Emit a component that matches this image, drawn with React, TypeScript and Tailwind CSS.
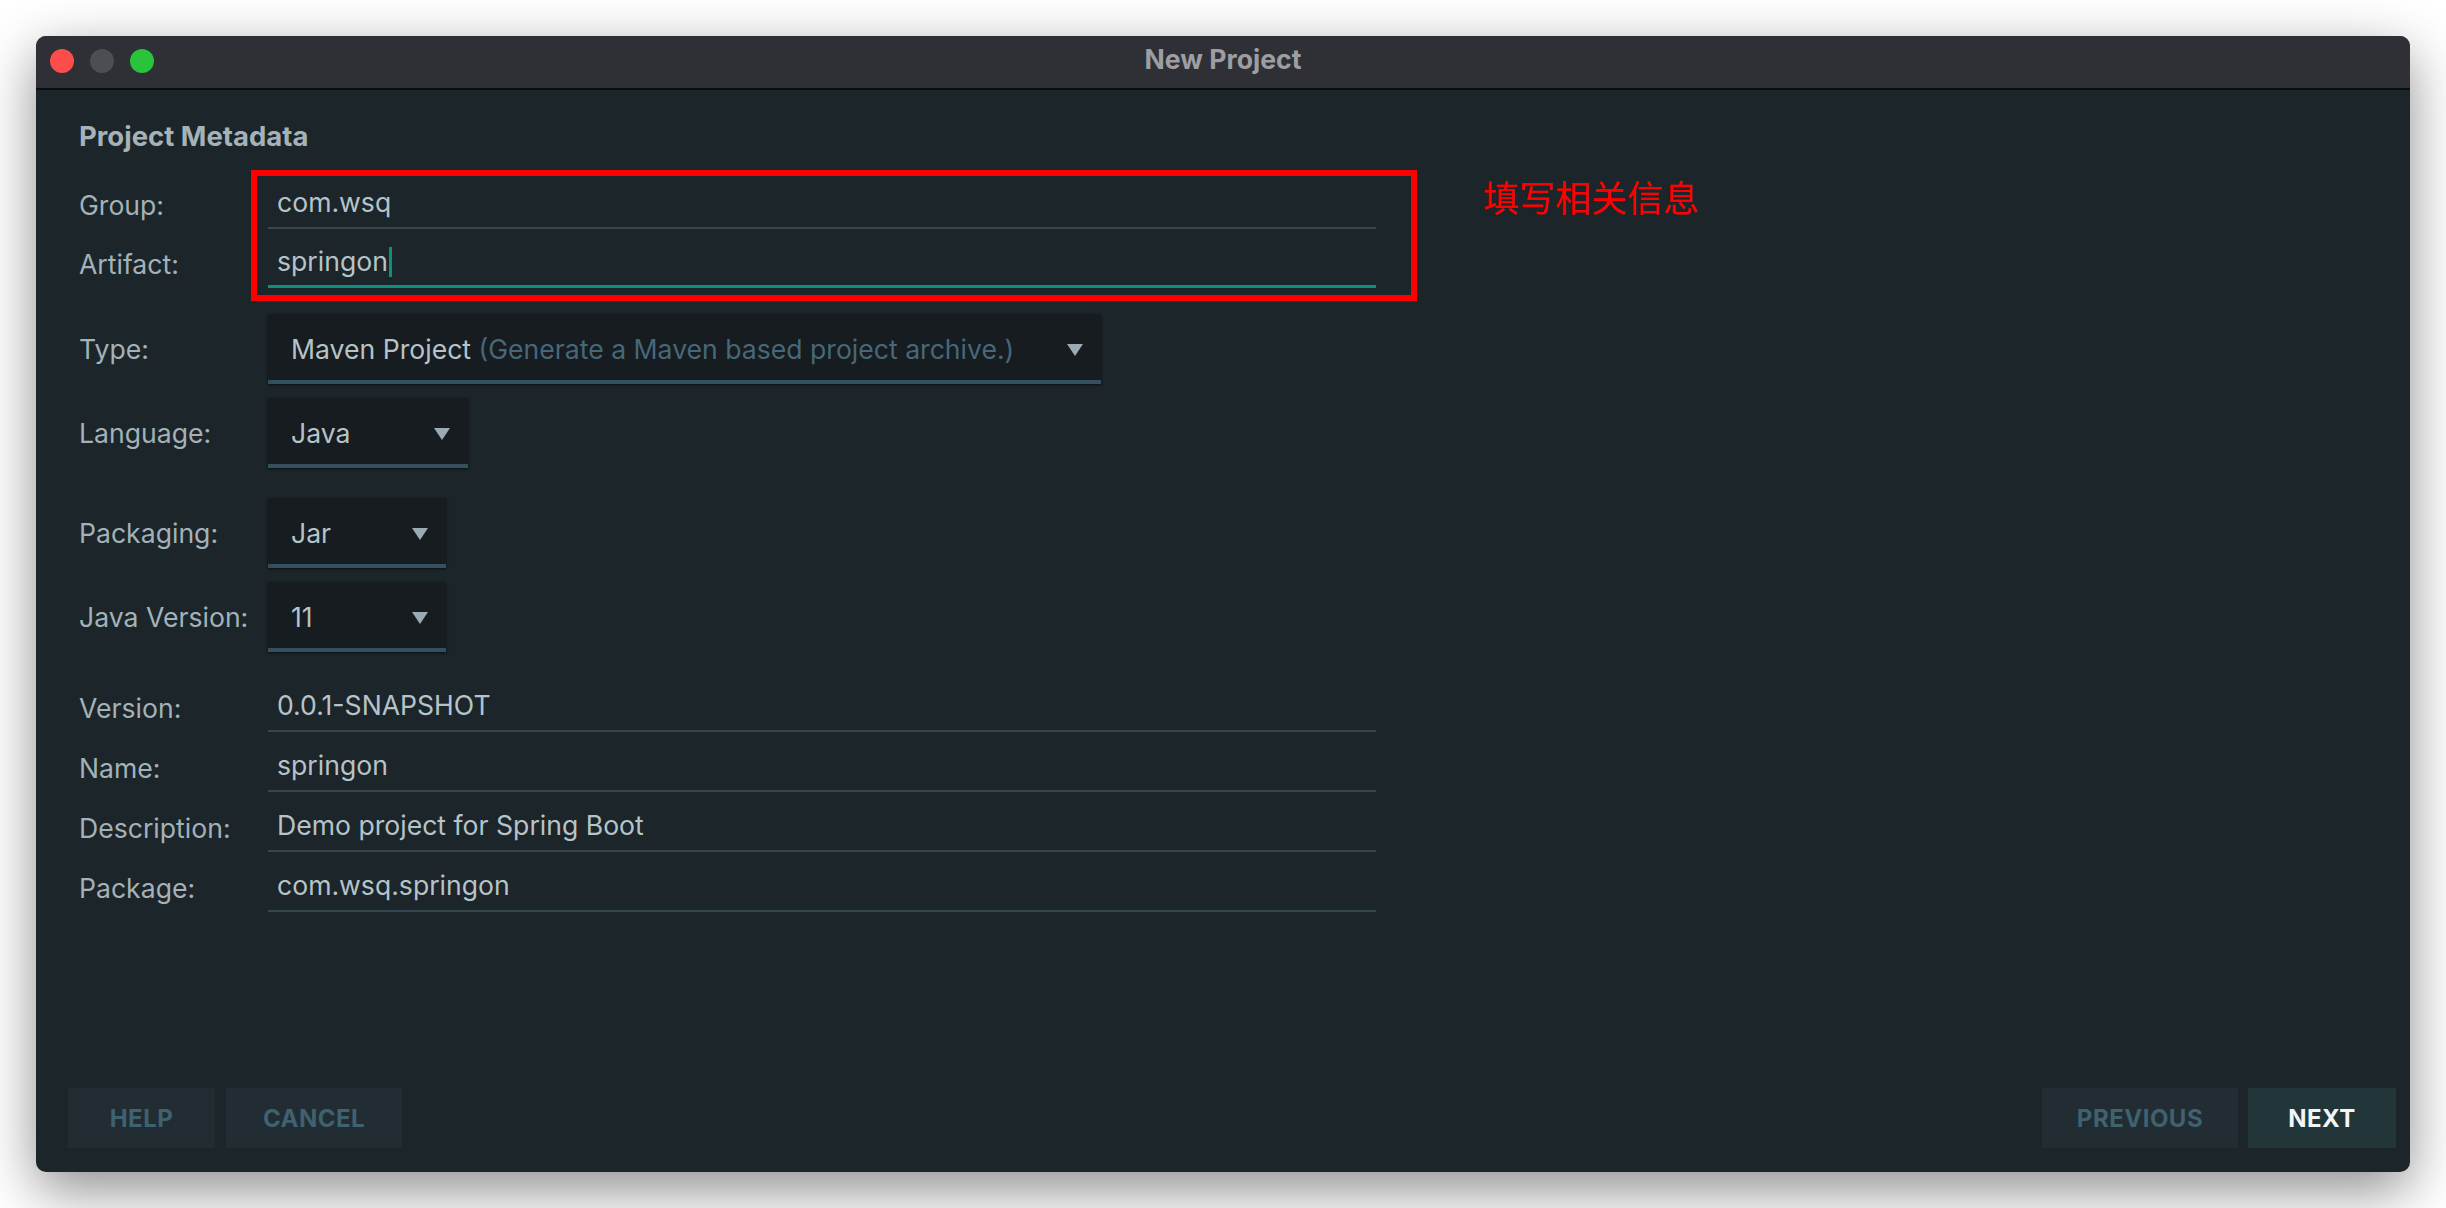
import React from "react";

const FONT = { fontFamily: "Inter, 'Noto Sans', sans-serif" };

function Arrow() {
  return (
    <svg width="16" height="12" viewBox="0 0 16 12" className="shrink-0">
      <path d="M0 0 L16 0 L8 12 Z" fill="#9aabb3" />
    </svg>
  );
}

function Label({ children }: { children: React.ReactNode }) {
  return (
    <div className="w-[189px] shrink-0 text-[26.6px] leading-[32px] text-[#a3b2b8]">{children}</div>
  );
}

function Field({
  label,
  value,
  active,
  cursor,
  className,
}: {
  label: string;
  value: string;
  active?: boolean;
  cursor?: boolean;
  className?: string;
}) {
  return (
    <div className={`flex items-center ${className ?? ""}`}>
      <Label>{label}</Label>
      <div
        className={`w-[1108px] h-[48px] flex items-center pl-[9px] pb-[2px] text-[26.6px] text-[#b6c3c8] ${
          active ? "border-b-[3px] border-[#0d8f7f]" : "border-b-2 border-[#34474f]"
        }`}
      >
        <span>{value}</span>
        {cursor && <span className="ml-[1px] w-[3px] h-[30px] bg-[#0d8f7f]" />}
      </div>
    </div>
  );
}

function Combo({
  label,
  width,
  children,
  className,
}: {
  label: string;
  width: string;
  children: React.ReactNode;
  className?: string;
}) {
  return (
    <div className={`flex items-center ${className ?? ""}`}>
      <Label>{label}</Label>
      <div
        className={`${width} h-[70px] flex items-center justify-between pt-[6px] pl-[23px] pr-[18px] bg-[#161c1f] border-b-4 border-[#33505e] shadow-[0_1px_2px_rgba(0,0,0,0.6)] text-[26.6px] text-[#b6c3c8]`}
      >
        <span className="whitespace-nowrap">{children}</span>
        <Arrow />
      </div>
    </div>
  );
}

function Btn({ children, width, primary }: { children: React.ReactNode; width: string; primary?: boolean }) {
  return (
    <div
      className={`${width} h-[60px] flex items-center justify-center pt-[2px] text-[24px] font-bold tracking-[0.5px] ${
        primary ? "bg-[#22363a] text-[#f2f5f6]" : "bg-[#212d33] text-[#40616f]"
      }`}
    >
      {children}
    </div>
  );
}

export default function App() {
  return (
    <div className="w-[2446px] h-[1208px] bg-white pt-[36px] pl-[36px]" style={FONT}>
      <div className="relative w-[2374px] h-[1136px] rounded-[10px] overflow-hidden bg-[#1c252a] flex flex-col shadow-[0_18px_55px_rgba(0,0,0,0.45)]">
        {/* Title bar */}
        <div className="h-[54px] shrink-0 bg-[#2f3035] border-b-2 border-[#0c0d0f] grid grid-cols-[1fr_auto_1fr] items-center pb-[5px]">
          <div className="flex items-center gap-[16px] pl-[14px] pt-[2px]">
            <span className="w-[24px] h-[24px] rounded-full bg-[#fd4d4b]" />
            <span className="w-[24px] h-[24px] rounded-full bg-[#4d4e53]" />
            <span className="w-[24px] h-[24px] rounded-full bg-[#29c33c]" />
          </div>
          <div className="text-[26.6px] font-bold text-[#9d9ea3]">New Project</div>
          <div />
        </div>

        {/* Form */}
        <div className="flex flex-col pl-[43px] pt-[30px]">
          <div className="text-[27.5px] leading-[32px] font-bold text-[#a5b3b9]">Project Metadata</div>
          <Field label="Group:" value="com.wsq" className="mt-[29px]" />
          <Field label="Artifact:" value="springon" active cursor className="mt-[11px]" />
          <Combo label="Type:" width="w-[833px]" className="mt-[26px]">
            Maven Project <span className="text-[#46687a]">(Generate a Maven based project archive.)</span>
          </Combo>
          <Combo label="Language:" width="w-[200px]" className="mt-[14px]">
            Java
          </Combo>
          <Combo label="Packaging:" width="w-[178px]" className="mt-[30px]">
            Jar
          </Combo>
          <Combo label="Java Version:" width="w-[178px]" className="mt-[14px]">
            11
          </Combo>
          <Field label="Version:" value="0.0.1-SNAPSHOT" className="mt-[32px]" />
          <Field label="Name:" value="springon" className="mt-[12px]" />
          <Field label="Description:" value="Demo project for Spring Boot" className="mt-[12px]" />
          <Field label="Package:" value="com.wsq.springon" className="mt-[12px]" />
        </div>

        <div className="flex-1" />

        {/* Footer */}
        <div className="flex items-center justify-between pl-[32px] pr-[14px] pb-[24px]">
          <div className="flex gap-[11px]">
            <Btn width="w-[147px]">HELP</Btn>
            <Btn width="w-[176px]">CANCEL</Btn>
          </div>
          <div className="flex gap-[10px]">
            <Btn width="w-[196px]">PREVIOUS</Btn>
            <Btn width="w-[148px]" primary>
              NEXT
            </Btn>
          </div>
        </div>

        {/* Annotation overlay */}
        <div className="absolute left-[215px] top-[134px] w-[1166px] h-[131px] border-[6px] border-[#ff0000] pointer-events-none" />
        <div
          className="absolute left-[1447px] top-[139px] text-[36px] leading-[42px] text-[#ff0000]"
          style={{ fontFamily: "'Noto Sans CJK SC', 'Noto Sans', sans-serif" }}
        >
          填写相关信息
        </div>
      </div>
    </div>
  );
}
